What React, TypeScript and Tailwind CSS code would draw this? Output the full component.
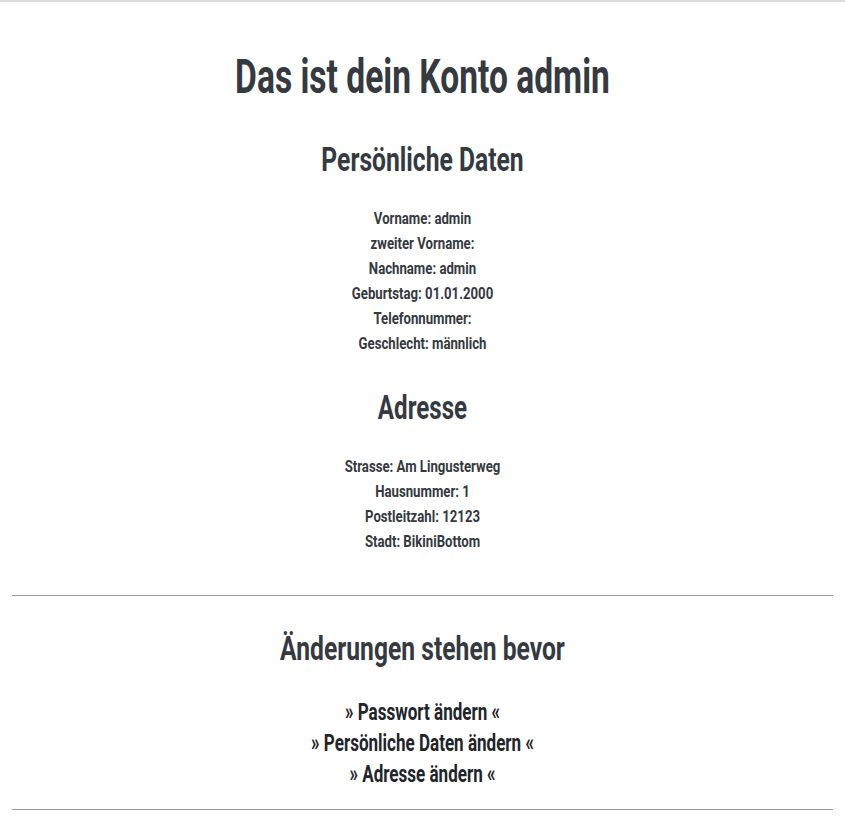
import React from "react";

const font = { fontFamily: 'Roboto, "Liberation Sans", sans-serif' };

export default function App() {
  const personal = [
    "Vorname: admin",
    "zweiter Vorname:",
    "Nachname: admin",
    "Geburtstag: 01.01.2000",
    "Telefonnummer:",
    "Geschlecht: männlich",
  ];
  const address = [
    "Strasse: Am Lingusterweg",
    "Hausnummer: 1",
    "Postleitzahl: 12123",
    "Stadt: BikiniBottom",
  ];
  const links = ["» Passwort ändern «", "» Persönliche Daten ändern «", "» Adresse ändern «"];
  return (
    <div className="min-h-[829px] bg-white text-[#343a40]" style={font}>
      <div className="h-[2px] bg-[#dedede]" />
      <div className="px-3 text-center">
        <h1 className="mt-[47px] scale-x-[0.685] whitespace-nowrap text-[49px] font-bold leading-[56px]">
          Das ist dein Konto admin
        </h1>
        <h2 className="mt-[34px] scale-x-[0.725] whitespace-nowrap text-[34px] font-bold leading-[40px]">
          Persönliche Daten
        </h2>
        <div className="mt-[27px] text-[17px] font-bold leading-[25px]">
          {personal.map((p) => (
            <div key={p} className="scale-x-[0.775] whitespace-nowrap">{p}</div>
          ))}
        </div>
        <h2 className="mt-[31px] scale-x-[0.71] whitespace-nowrap text-[34px] font-bold leading-[40px]">
          Adresse
        </h2>
        <div className="mt-[27px] text-[17px] font-bold leading-[25px]">
          {address.map((p) => (
            <div key={p} className="scale-x-[0.775] whitespace-nowrap">{p}</div>
          ))}
        </div>
        <hr className="mt-[41px] border-t border-[#9a9a9a]" />
        <h2 className="mt-[32px] scale-x-[0.725] whitespace-nowrap text-[34px] font-bold leading-[40px]">
          Änderungen stehen bevor
        </h2>
        <div className="mt-[29px] text-[24px] font-bold leading-[31px] text-[#212529]">
          {links.map((l) => (
            <div key={l} className="scale-x-[0.71] whitespace-nowrap">{l}</div>
          ))}
        </div>
        <hr className="mt-[19px] border-t border-[#9a9a9a]" />
      </div>
    </div>
  );
}
